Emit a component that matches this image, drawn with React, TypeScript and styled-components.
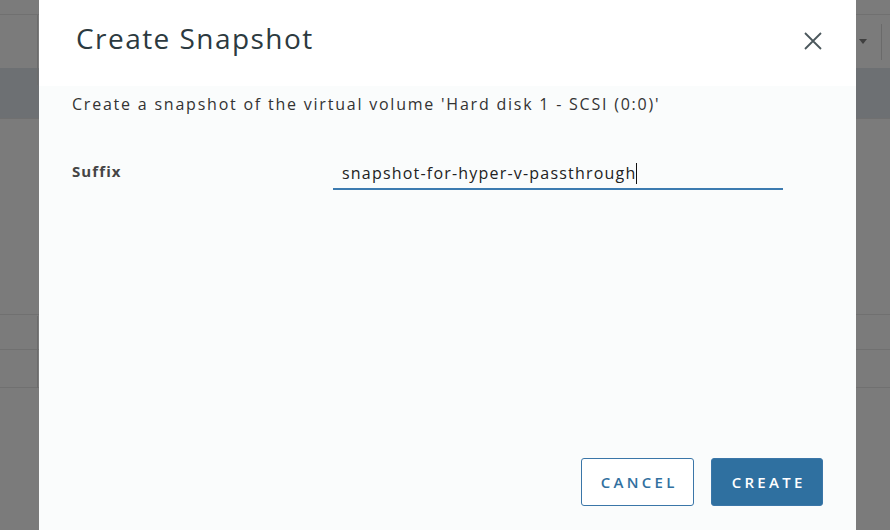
import React from "react";
import styled, { createGlobalStyle } from "styled-components";

const Global = createGlobalStyle`
  html, body { margin: 0; padding: 0; background: #7b7b7b; }
  body { font-family: "Open Sans", "DejaVu Sans", sans-serif; }
  #root { width: 890px; height: 530px; overflow: hidden; }
`;

const Page = styled.div`
  position: relative;
  width: 890px;
  height: 530px;
  background-color: #7b7b7b;
  overflow: hidden;
`;

const Backdrop = styled.div`
  display: flex;
  flex-direction: column;
`;

const BgRow = styled.div<{ $h: number; $bg?: string; $line?: boolean }>`
  height: ${(p) => p.$h}px;
  flex: none;
  background-color: ${(p) => p.$bg || "#7b7b7b"};
  border-bottom: ${(p) => (p.$line ? "1px solid #707070" : "none")};
  display: flex;
  align-items: center;
  justify-content: flex-end;
  padding-right: 8px;
  gap: 14px;
  box-sizing: border-box;
`;

const Caret = styled.div`
  width: 0;
  height: 0;
  border-left: 4px solid transparent;
  border-right: 4px solid transparent;
  border-top: 5px solid #3f3f3f;
`;

const VDivider = styled.div`
  width: 1px;
  height: 36px;
  background: #6a6a6a;
`;

const LeftRule = styled.div<{ $top: number; $h: number }>`
  position: absolute;
  left: 37px;
  top: ${(p) => p.$top}px;
  width: 1px;
  height: ${(p) => p.$h}px;
  background: #6c6c6c;
`;

const Dialog = styled.div`
  position: absolute;
  left: 39px;
  top: 0;
  width: 817px;
  height: 560px;
  background: #fafcfc;
  display: flex;
  flex-direction: column;
`;

const Header = styled.div`
  height: 86px;
  background: #ffffff;
  display: flex;
  align-items: flex-start;
  justify-content: space-between;
  padding: 18px 32px 0 37px;
  box-sizing: border-box;
`;

const Title = styled.div`
  margin: 0;
  font-weight: 400;
  font-size: 28px;
  line-height: 40px;
  color: #2c3a40;
  letter-spacing: 1.45px;
`;

const CloseButton = styled.div`
  margin-top: 12px;
  width: 22px;
  height: 22px;
  display: flex;
  align-items: center;
  justify-content: center;
  cursor: pointer;
`;

const Content = styled.div`
  flex: 1;
  padding: 6px 33px 0 33px;
  display: flex;
  flex-direction: column;
`;

const Description = styled.div`
  margin: 0;
  font-size: 16px;
  line-height: 24px;
  color: #333333;
  letter-spacing: 1.78px;
`;

const FieldRow = styled.div`
  display: grid;
  grid-template-columns: 261px 450px;
  align-items: start;
  margin-top: 42px;
`;

const Label = styled.div`
  font-size: 15px;
  font-weight: 700;
  line-height: 24px;
  color: #454545;
  padding-top: 1px;
  letter-spacing: 1.1px;
`;

const InputBox = styled.div`
  height: 32px;
  border-bottom: 2px solid #3c7bb0;
  display: flex;
  align-items: center;
  padding-left: 9px;
  box-sizing: border-box;
`;

const InputText = styled.span`
  font-size: 16px;
  color: #222222;
  letter-spacing: 1.2px;
`;

const TextCaret = styled.span`
  display: inline-block;
  width: 1px;
  height: 21px;
  background: #111;
`;

const Footer = styled.div`
  margin-top: auto;
  display: flex;
  justify-content: flex-end;
  gap: 17px;
  padding: 0 0 54px 0;
`;

const Button = styled.div<{ $primary?: boolean }>`
  height: 48px;
  width: ${(p) => (p.$primary ? "112px" : "113px")};
  box-sizing: border-box;
  border-radius: 3px;
  border: 1px solid #3a76a8;
  background: ${(p) => (p.$primary ? "#2f70a0" : "#ffffff")};
  color: ${(p) => (p.$primary ? "#ffffff" : "#31709f")};
  font-size: 15px;
  font-weight: 600;
  letter-spacing: 3.3px;
  text-indent: 3.3px;
  display: flex;
  align-items: center;
  justify-content: center;
  cursor: pointer;
`;

export default function App() {
  return (
    <>
      <Global />
      <Page>
        <Backdrop>
          <BgRow $h={15} $line />
          <BgRow $h={53}>
            <Caret />
            <VDivider />
          </BgRow>
          <BgRow $h={51} $bg="#6d7073" $line />
          <BgRow $h={196} $line />
          <BgRow $h={35} $line />
          <BgRow $h={38} $line />
        </Backdrop>
        <LeftRule $top={15} $h={70} />
        <LeftRule $top={316} $h={72} />
        <Dialog>
          <Header>
            <Title>Create Snapshot</Title>
            <CloseButton>
              <svg width="20" height="20" viewBox="0 0 20 20">
                <path d="M2 2 L18 18 M18 2 L2 18" stroke="#4b575c" strokeWidth="1.8" fill="none" />
              </svg>
            </CloseButton>
          </Header>
          <Content>
            <Description>
              Create a snapshot of the virtual volume 'Hard disk 1 - SCSI (0:0)'
            </Description>
            <FieldRow>
              <Label>Suffix</Label>
              <InputBox>
                <InputText>snapshot-for-hyper-v-passthrough</InputText>
                <TextCaret />
              </InputBox>
            </FieldRow>
            <Footer>
              <Button>CANCEL</Button>
              <Button $primary>CREATE</Button>
            </Footer>
          </Content>
        </Dialog>
      </Page>
    </>
  );
}
